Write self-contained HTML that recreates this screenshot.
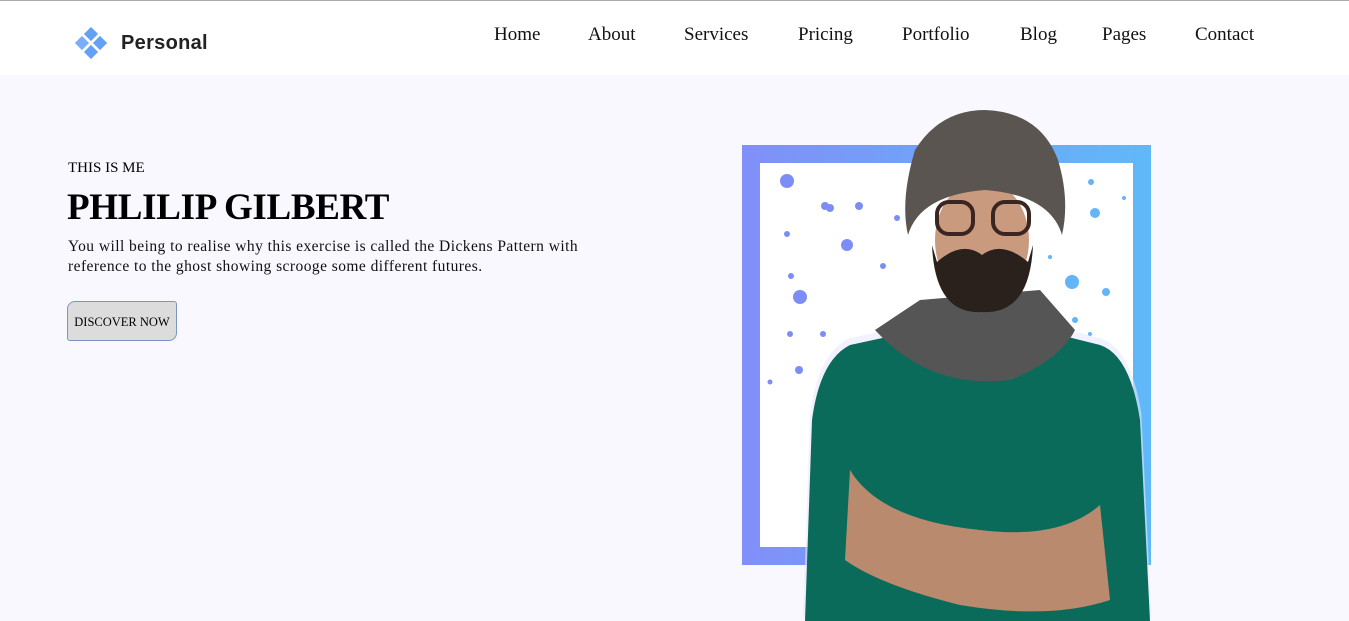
<!DOCTYPE html>
<html><head><meta charset="utf-8"><style>
*{margin:0;padding:0;box-sizing:border-box}
html,body{width:1349px;height:621px;overflow:hidden}
body{background:#f8f8fe;font-family:"Liberation Serif",serif;position:relative}
.hdr{position:absolute;left:0;top:0;width:1349px;height:75px;background:#fff;border-top:1px solid #aaa}
.logo{position:absolute;left:121px;top:31px;font-family:"Liberation Sans",sans-serif;font-weight:bold;font-size:20px;color:#222;letter-spacing:0.3px}
nav a{position:absolute;top:23px;font-size:19px;color:#111;text-decoration:none}
.t{position:absolute;color:#000}
.btn{position:absolute;left:67px;top:301px;width:110px;height:40px;background:#dcdcdc;border:1px solid #7b93c9;border-radius:8px 3px 8px 3px;font-size:12.5px;text-align:center;line-height:40px}
</style></head><body>
<div class="hdr">
<svg style="position:absolute;left:75px;top:26px" width="32" height="32" viewBox="0 0 32 32">
<g fill="#64a0f4"><rect x="11" y="2" width="10" height="10" transform="rotate(45 16 7)"/><rect x="2" y="11" width="10" height="10" transform="rotate(45 7 16)" fill="#7aaef6"/><rect x="20" y="11" width="10" height="10" transform="rotate(45 25 16)"/><rect x="11" y="20" width="10" height="10" transform="rotate(45 16 25)"/></g></svg>
<div class="logo">Personal</div>
<nav><a style="left:494px">Home</a><a style="left:588px">About</a><a style="left:684px">Services</a><a style="left:798px">Pricing</a><a style="left:902px">Portfolio</a><a style="left:1020px">Blog</a><a style="left:1102px">Pages</a><a style="left:1195px">Contact</a></nav>
</div>
<div class="t" style="left:68px;top:160px;font-size:15px">THIS IS ME</div>
<div class="t" style="left:67px;top:186px;font-size:37px;font-weight:bold;letter-spacing:-0.3px">PHLILIP GILBERT</div>
<div class="t" style="left:68px;top:237px;font-size:15.5px;line-height:20px;color:#111;letter-spacing:0.45px;white-space:nowrap">You will being to realise why this exercise is called the Dickens Pattern with<br>reference to the ghost showing scrooge some different futures.</div>
<div class="btn">DISCOVER NOW</div>
<svg style="position:absolute;left:700px;top:90px" width="500" height="531" viewBox="700 90 500 531">
<defs><linearGradient id="g" x1="0" x2="1"><stop offset="0" stop-color="#8090f8"/><stop offset="1" stop-color="#60b8f8"/></linearGradient></defs>
<rect x="751" y="154" width="391" height="402" fill="#fff" stroke="url(#g)" stroke-width="18"/>
<g fill="#7c8ef6"><circle cx="787" cy="181" r="7"/><circle cx="825" cy="206" r="4"/><circle cx="859" cy="206" r="4"/><circle cx="787" cy="234" r="3"/><circle cx="847" cy="245" r="6"/><circle cx="883" cy="266" r="3"/><circle cx="791" cy="276" r="3"/><circle cx="800" cy="297" r="7"/><circle cx="790" cy="334" r="3"/><circle cx="823" cy="334" r="3"/><circle cx="799" cy="370" r="4"/><circle cx="770" cy="382" r="2.5"/><circle cx="830" cy="208" r="4"/><circle cx="897" cy="218" r="3"/></g>
<g fill="#64b4f8"><circle cx="1091" cy="182" r="3"/><circle cx="1095" cy="213" r="5"/><circle cx="1124" cy="198" r="2"/><circle cx="1072" cy="282" r="7"/><circle cx="1106" cy="292" r="4"/><circle cx="1050" cy="257" r="2"/><circle cx="1075" cy="320" r="3"/><circle cx="1090" cy="334" r="2"/></g>
<path d="M850 345 Q820 360 812 420 L805 621 L1150 621 L1140 420 Q1130 355 1100 345 L1040 330 L920 330 Z" fill="#e8e8ff" opacity="0.6" transform="translate(-10 -10) scale(1.01)"/>
<path d="M850 345 Q820 360 812 420 L805 621 L1150 621 L1140 420 Q1130 355 1100 345 L1040 330 L920 330 Z" fill="#0b6b5a"/>
<path d="M850 470 Q880 520 980 530 Q1060 540 1100 505 L1110 600 Q1050 620 960 605 Q880 585 845 560 Z" fill="#b98a6e"/>
<path d="M875 330 Q930 390 1010 380 Q1060 360 1075 330 L1040 290 L920 300 Z" fill="#555"/>
<ellipse cx="982" cy="240" rx="47" ry="60" fill="#c99a7e"/>
<path d="M932 245 Q935 315 982 312 Q1030 315 1033 245 L1028 262 Q1002 240 982 255 Q962 240 937 262 Z" fill="#2a211d"/>
<path d="M908 235 Q900 200 915 150 Q940 110 985 110 Q1040 112 1058 160 Q1070 200 1062 235 Q1050 195 985 190 Q920 195 908 235 Z" fill="#5a5550"/>
<rect x="937" y="202" width="36" height="32" rx="12" fill="none" stroke="#3a2520" stroke-width="4"/>
<rect x="993" y="202" width="36" height="32" rx="12" fill="none" stroke="#3a2520" stroke-width="4"/>
</svg>
</body></html>
